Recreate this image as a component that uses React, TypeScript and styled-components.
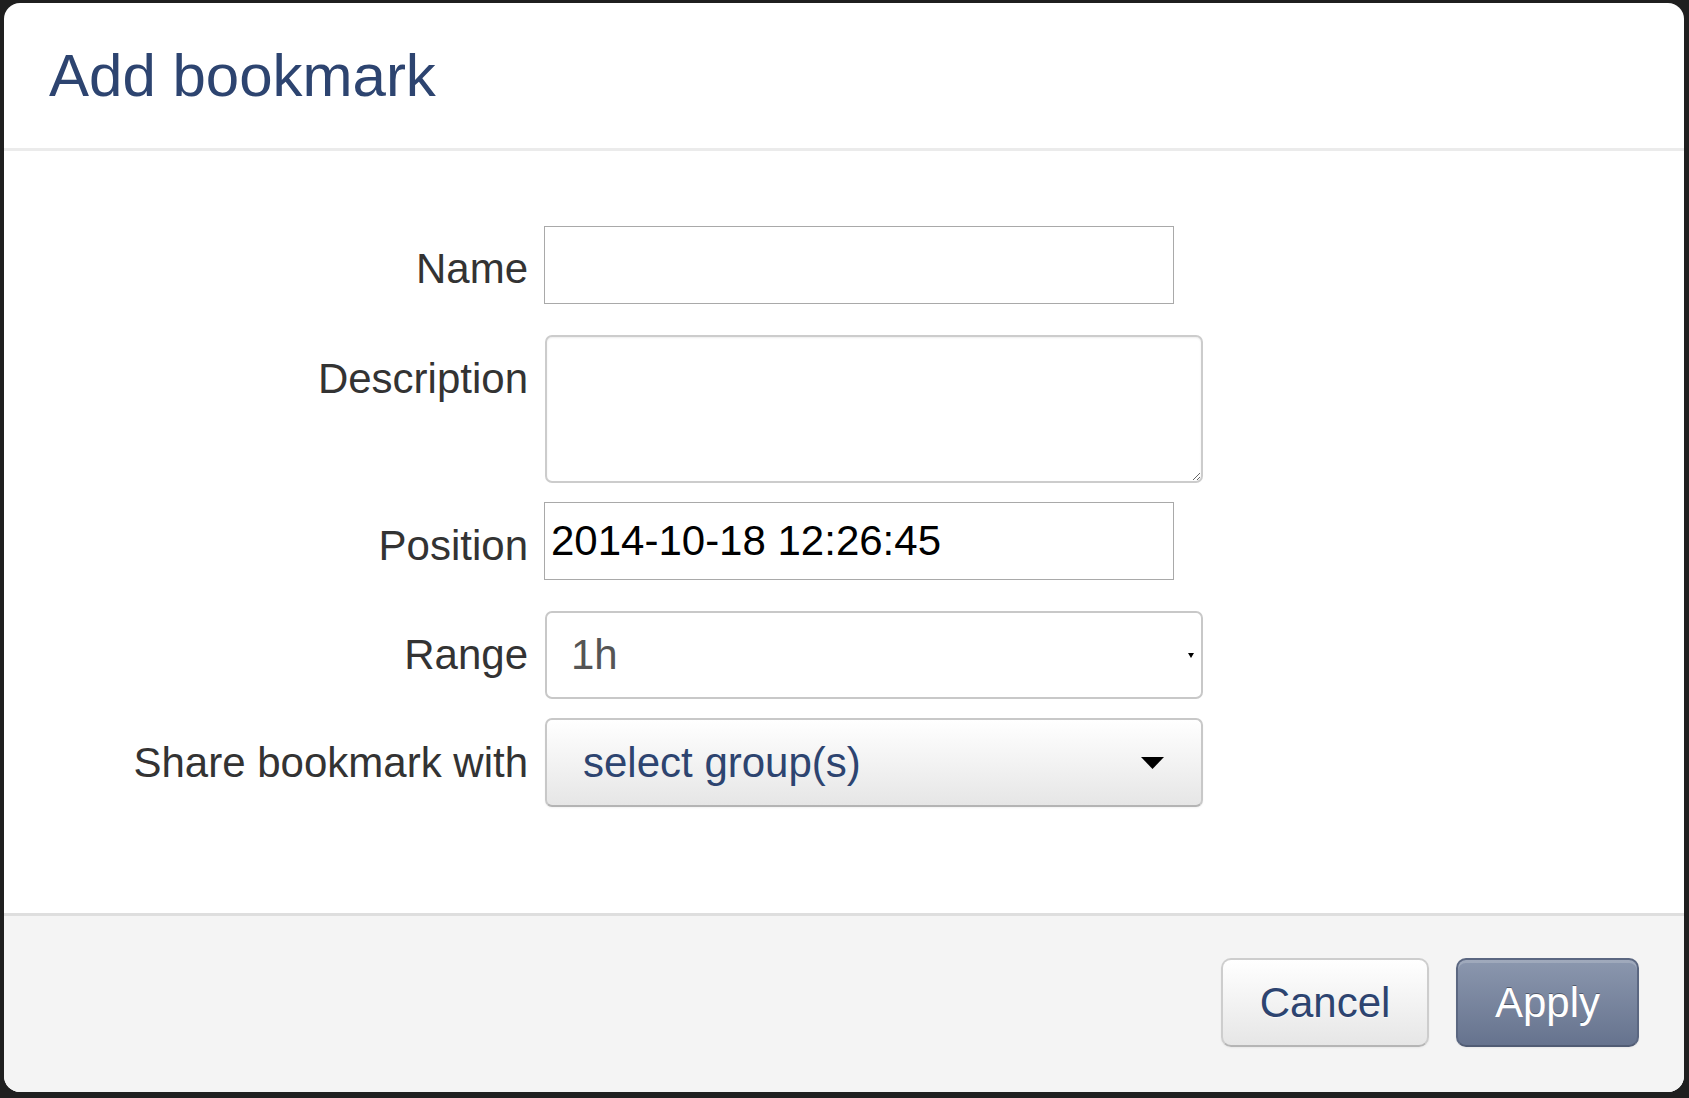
import React from "react";
import styled, { createGlobalStyle } from "styled-components";

const GlobalStyle = createGlobalStyle`
  html, body {
    margin: 0;
    padding: 0;
    background: #1e1e1e;
  }
  body {
    font-family: "Liberation Sans", Arial, sans-serif;
  }
  * { box-sizing: border-box; }
`;

const Backdrop = styled.div`
  width: 1689px;
  height: 1098px;
  padding: 3px 5px 6px 4px;
  background: #1f1f1f;
`;

const Dialog = styled.div`
  width: 1680px;
  height: 1089px;
  background: #fff;
  border-radius: 16px;
  overflow: hidden;
  display: flex;
  flex-direction: column;
`;

const Header = styled.div`
  height: 148px;
  flex: none;
  border-bottom: 3px solid #ebebeb;
  padding: 0 0 0 45px;
  display: flex;
  align-items: center;
`;

const Title = styled.h3`
  margin: 0;
  font-size: 60px;
  line-height: 1;
  font-weight: normal;
  color: #2d4470;
`;

const Body = styled.div`
  flex: 1;
  padding-top: 75px;
  display: flex;
  flex-direction: column;
`;

const Row = styled.div<{ $gap: number; $top?: boolean }>`
  display: flex;
  align-items: ${(p) => (p.$top ? "flex-start" : "center")};
  gap: 16px;
  margin-bottom: ${(p) => p.$gap}px;
`;

const Label = styled.label<{ $shift?: number }>`
  flex: none;
  width: 524px;
  text-align: right;
  padding-top: ${(p) => p.$shift || 0}px;
  font-size: 42px;
  line-height: 48px;
  color: #333;
  white-space: nowrap;
`;

const TextInput = styled.div`
  width: 630px;
  height: 78px;
  border: 1px solid #a9a9a9;
  background: #fff;
  padding-left: 6px;
  display: flex;
  align-items: center;
  font-size: 42px;
  color: #000;
`;

const TextArea = styled.textarea`
  width: 658px;
  height: 148px;
  margin: 0 0 0 1px;
  border: 2px solid #cccccc;
  border-radius: 7px;
  box-shadow: inset 0 1px 2px rgba(0, 0, 0, 0.08);
  background: #fff;
  resize: both;
  font-family: inherit;
  font-size: 42px;
  outline: none;
`;

const SelectBox = styled.div`
  width: 658px;
  height: 88px;
  margin-left: 1px;
  border: 2px solid #c8c8c8;
  border-radius: 7px;
  background: #fff;
  padding: 0 7px 0 24px;
  display: flex;
  align-items: center;
  justify-content: space-between;
  font-size: 42px;
  color: #555;
`;

const GroupButton = styled.div`
  width: 658px;
  height: 89px;
  margin-left: 1px;
  border: 2px solid #c8c8c8;
  border-bottom-color: #b4b4b4;
  border-radius: 7px;
  background: linear-gradient(to bottom, #ffffff, #e6e6e6);
  box-shadow: inset 0 1px 0 rgba(255, 255, 255, 0.2), 0 1px 2px rgba(0, 0, 0, 0.05);
  padding: 0 37px 0 36px;
  display: flex;
  align-items: center;
  justify-content: space-between;
  font-size: 42px;
  color: #2d4470;
`;

const Footer = styled.div`
  height: 179px;
  flex: none;
  border-top: 3px solid #dedede;
  background: #f4f4f4;
  padding: 42px 45px 0 0;
  display: flex;
  justify-content: flex-end;
  align-items: flex-start;
  gap: 27px;
`;

const Button = styled.button<{ $primary?: boolean }>`
  height: 89px;
  width: ${(p) => (p.$primary ? 183 : 208)}px;
  border-radius: 10px;
  font-family: inherit;
  font-size: 42px;
  padding: 0;
  cursor: pointer;
  border: 2px solid ${(p) => (p.$primary ? "#5b6781" : "#cdcdcd")};
  border-bottom-color: ${(p) => (p.$primary ? "#515c74" : "#b5b5b5")};
  color: ${(p) => (p.$primary ? "#fff" : "#2d4470")};
  text-shadow: ${(p) =>
    p.$primary ? "0 -1px 0 rgba(0,0,0,0.35)" : "0 1px 1px rgba(255,255,255,0.75)"};
  background: ${(p) =>
    p.$primary
      ? "linear-gradient(to bottom, #8b97ae, #66738e)"
      : "linear-gradient(to bottom, #ffffff, #e6e6e6)"};
  box-shadow: ${(p) =>
    p.$primary
      ? "inset 0 3px 0 rgba(255,255,255,0.18), 0 1px 2px rgba(0,0,0,0.05)"
      : "inset 0 1px 0 rgba(255,255,255,0.2), 0 1px 2px rgba(0,0,0,0.05)"};
`;

const TinyArrow = () => (
  <svg width="6" height="5" viewBox="0 0 6 5">
    <path d="M0 0 H6 L3 5 Z" fill="#000" />
  </svg>
);

const Caret = () => (
  <svg width="23" height="12" viewBox="0 0 23 12">
    <path d="M0 0 H23 L11.5 12 Z" fill="#000" />
  </svg>
);

export default function App() {
  return (
    <>
      <GlobalStyle />
      <Backdrop>
        <Dialog>
          <Header>
            <Title>Add bookmark</Title>
          </Header>
          <Body>
            <Row $gap={31}>
              <Label $shift={8}>Name</Label>
              <TextInput />
            </Row>

            <Row $gap={19} $top>
              <Label $shift={20}>Description</Label>
              <TextArea />
            </Row>

            <Row $gap={31}>
              <Label $shift={10}>Position</Label>
              <TextInput>2014-10-18 12:26:45</TextInput>
            </Row>

            <Row $gap={19}>
              <Label>Range</Label>
              <SelectBox>
                <span>1h</span>
                <TinyArrow />
              </SelectBox>
            </Row>

            <Row $gap={0}>
              <Label>Share bookmark with</Label>
              <GroupButton>
                <span>select group(s)</span>
                <Caret />
              </GroupButton>
            </Row>
          </Body>
          <Footer>
            <Button>Cancel</Button>
            <Button $primary>Apply</Button>
          </Footer>
        </Dialog>
      </Backdrop>
    </>
  );
}
